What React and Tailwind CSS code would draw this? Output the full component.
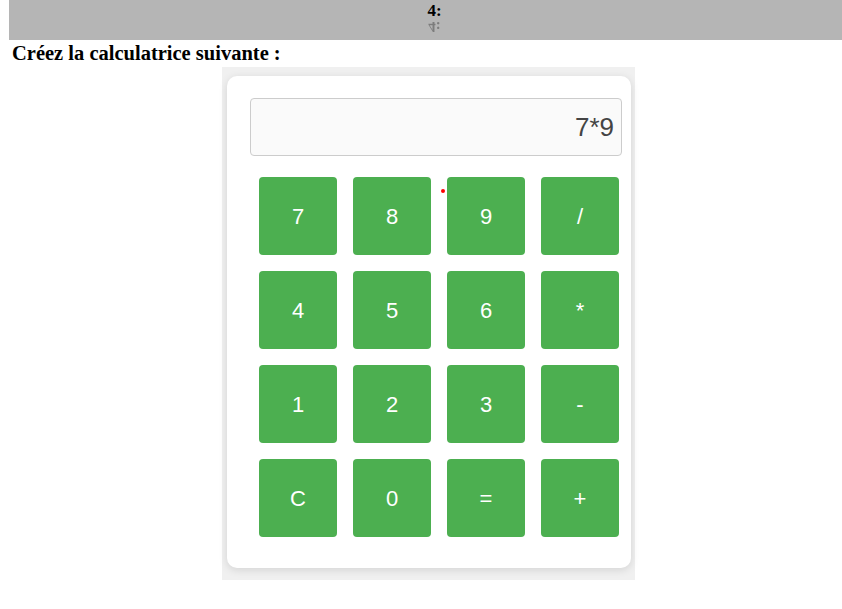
export default function App() {
  const keys = ["7", "8", "9", "/", "4", "5", "6", "*", "1", "2", "3", "-", "C", "0", "=", "+"];
  return (
    <div className="w-[842px] h-[609px] bg-white relative overflow-hidden" style={{ fontFamily: '"Liberation Serif", serif' }}>
      <div className="ml-[9px] h-[40px] bg-[#b5b5b5] flex flex-col items-center pt-[2px]">
        <div className="text-[17px] font-bold leading-[18px] text-black ml-[18px]">4:</div>
        <div className="text-[15px] font-bold leading-[13px] text-black ml-[18px] -scale-y-100 opacity-30 blur-[0.6px]" aria-hidden="true">4:</div>
      </div>
      <div className="ml-[12px] mt-[2px] text-[20.5px] font-bold leading-[22px] text-black">Créez la calculatrice suivante :</div>
      <div className="ml-[222px] mt-[3px] w-[413px] h-[513px] bg-[#f0f0f0] pt-[9px] pl-[5px]">
        <div className="w-[404px] h-[492px] bg-white rounded-[10px] shadow-[0_2px_8px_rgba(0,0,0,0.12)] pt-[22px] pl-[23px] relative" style={{ fontFamily: '"Liberation Sans", Arial, sans-serif' }}>
          <div className="w-[372px] h-[58px] bg-[#fafafa] border border-[#cccccc] rounded-[4px] flex items-center justify-end pr-[7px] text-[26px] text-[#444444]">7*9</div>
          <div className="mt-[21px] ml-[9px] grid grid-cols-[repeat(4,78px)] gap-[16px]">
            {keys.map((k) => (
              <div key={k} className="w-[78px] h-[78px] bg-[#4caf50] rounded-[4px] flex items-center justify-center text-white text-[22px]">
                {k}
              </div>
            ))}
          </div>
          <div className="absolute left-[214px] top-[113px] w-[4px] h-[4px] rounded-full bg-[#ff0000]"></div>
        </div>
      </div>
    </div>
  );
}
